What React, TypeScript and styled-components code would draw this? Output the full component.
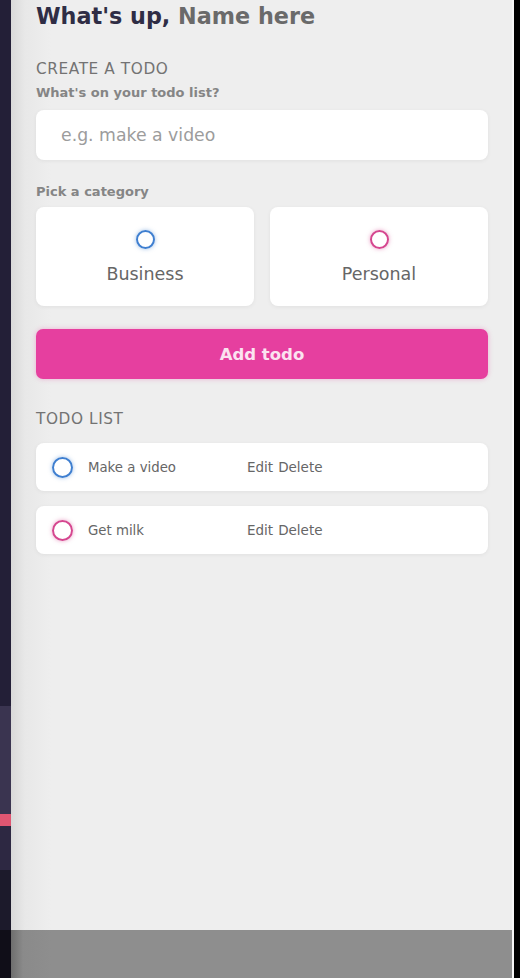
import React from "react";
import styled, { createGlobalStyle } from "styled-components";

const Global = createGlobalStyle`
  html, body { margin: 0; padding: 0; background: #000; }
  body { font-family: "DejaVu Sans", "Open Sans", sans-serif; }
  * { box-sizing: border-box; }
`;

const Screen = styled.div`
  display: flex;
  width: 520px;
  height: 978px;
  overflow: hidden;
`;

const LeftRail = styled.div`
  width: 11px;
  display: flex;
  flex-direction: column;
`;

const RailSegment = styled.div<{ $h: number; $c: string }>`
  height: ${(p) => p.$h}px;
  background: ${(p) => p.$c};
  flex-shrink: 0;
`;

const RailFill = styled.div<{ $c: string }>`
  flex: 1;
  background: ${(p) => p.$c};
`;

const RightRail = styled.div`
  width: 8px;
  background: #000;
  border-left: 2px solid #f7f7f7;
`;

const Panel = styled.div`
  flex: 1;
  display: flex;
  flex-direction: column;
  background: linear-gradient(to right, #d9d9d9 0px, #e8e8e8 14px, #eeeeee 40px);
`;

const Content = styled.main`
  flex: 1;
  padding: 2px 24px 0 25px;
  display: flex;
  flex-direction: column;
`;

const BottomBar = styled.div`
  height: 48px;
  background: linear-gradient(to right, #6e6e6e 0px, #8a8a8a 12px, #8e8e8e 40px);
`;

const Greeting = styled.h1`
  margin: 0;
  font-size: 22.3px;
  line-height: 29px;
  font-weight: 700;
  color: #2f2d45;
`;

const NameSpan = styled.span`
  color: #6a6a6a;
`;

const SectionTitle = styled.h3<{ $mt: number }>`
  margin: ${(p) => p.$mt}px 0 0 0;
  font-size: 15.3px;
  line-height: 20px;
  font-weight: 400;
  color: #737373;
  text-transform: uppercase;
  letter-spacing: 0.6px;
`;

const FieldLabel = styled.h4<{ $mt: number }>`
  margin: ${(p) => p.$mt}px 0 0 0;
  font-size: 13px;
  line-height: 16px;
  font-weight: 700;
  color: #858585;
`;

const Card = styled.div`
  background: #fff;
  border-radius: 8px;
  box-shadow: 0 1px 4px rgba(0, 0, 0, 0.06);
`;

const InputBox = styled(Card).attrs({ as: "label" })`
  display: flex;
  align-items: center;
  height: 50px;
  margin-top: 9px;
  padding: 0 23px;
`;

const TextInput = styled.input`
  border: none;
  outline: none;
  background: transparent;
  width: 100%;
  font-family: inherit;
  font-size: 17.3px;
  color: #333;
  &::placeholder { color: #9c9c9c; }
`;

const CategoryGrid = styled.div`
  display: grid;
  grid-template-columns: 1fr 1fr;
  gap: 16px;
  margin-top: 7px;
`;

const CategoryCard = styled(Card)`
  height: 99px;
  display: flex;
  flex-direction: column;
  align-items: center;
  padding-top: 23px;
  gap: 14px;
`;

const Bubble = styled.span<{ $c: string; $glow: string; $size: number }>`
  width: ${(p) => p.$size}px;
  height: ${(p) => p.$size}px;
  border-radius: 50%;
  border: 2px solid ${(p) => p.$c};
  box-shadow: 0 0 4px ${(p) => p.$glow};
  flex-shrink: 0;
`;

const CategoryLabel = styled.span`
  font-size: 17.5px;
  line-height: 22px;
  color: #666;
`;

const AddButton = styled.button`
  margin-top: 23px;
  height: 50px;
  border: none;
  border-radius: 7px;
  background: #e63f9f;
  box-shadow: 0 0 5px rgba(230, 63, 159, 0.35);
  color: #fbe3f0;
  font-family: inherit;
  font-size: 16.5px;
  font-weight: 600;
  cursor: pointer;
`;

const TodoList = styled.ul`
  list-style: none;
  margin: 14px 0 0 0;
  padding: 0;
  display: flex;
  flex-direction: column;
  gap: 15px;
`;

const TodoItem = styled(Card).attrs({ as: "li" })`
  height: 48px;
  display: flex;
  align-items: center;
  padding-left: 16px;
`;

const TodoText = styled.span`
  margin-left: 15px;
  width: 159px;
  font-size: 13.3px;
  color: #666;
`;

const Actions = styled.div`
  display: flex;
  gap: 5px;
`;

const ActionLink = styled.button`
  border: none;
  background: none;
  padding: 0;
  font-family: inherit;
  font-size: 13.5px;
  color: #666;
  cursor: pointer;
`;

const BLUE = "#3f7fd0";
const BLUE_GLOW = "rgba(63,127,208,0.5)";
const PINK = "#d5468f";
const PINK_GLOW = "rgba(213,70,143,0.5)";

const todos = [
  { text: "Make a video", c: BLUE, g: BLUE_GLOW },
  { text: "Get milk", c: PINK, g: PINK_GLOW },
];

export default function App() {
  return (
    <>
      <Global />
      <Screen>
        <LeftRail>
          <RailSegment $h={706} $c="#231f37" />
          <RailSegment $h={108} $c="#3a3450" />
          <RailSegment $h={12} $c="#e05672" />
          <RailSegment $h={44} $c="#2d2842" />
          <RailSegment $h={60} $c="#1c1a2b" />
          <RailFill $c="#100e18" />
        </LeftRail>
        <Panel>
          <Content>
            <Greeting>
              What's up, <NameSpan>Name here</NameSpan>
            </Greeting>
            <SectionTitle $mt={28}>Create a todo</SectionTitle>
            <FieldLabel $mt={6}>What's on your todo list?</FieldLabel>
            <InputBox>
              <TextInput placeholder="e.g. make a video" />
            </InputBox>
            <FieldLabel $mt={24}>Pick a category</FieldLabel>
            <CategoryGrid>
              <CategoryCard>
                <Bubble $c={BLUE} $glow={BLUE_GLOW} $size={19} />
                <CategoryLabel>Business</CategoryLabel>
              </CategoryCard>
              <CategoryCard>
                <Bubble $c={PINK} $glow={PINK_GLOW} $size={19} />
                <CategoryLabel>Personal</CategoryLabel>
              </CategoryCard>
            </CategoryGrid>
            <AddButton>Add todo</AddButton>
            <SectionTitle $mt={30}>Todo list</SectionTitle>
            <TodoList>
              {todos.map((t) => (
                <TodoItem key={t.text}>
                  <Bubble $c={t.c} $glow={t.g} $size={21} />
                  <TodoText>{t.text}</TodoText>
                  <Actions>
                    <ActionLink>Edit</ActionLink>
                    <ActionLink>Delete</ActionLink>
                  </Actions>
                </TodoItem>
              ))}
            </TodoList>
          </Content>
          <BottomBar />
        </Panel>
        <RightRail />
      </Screen>
    </>
  );
}
